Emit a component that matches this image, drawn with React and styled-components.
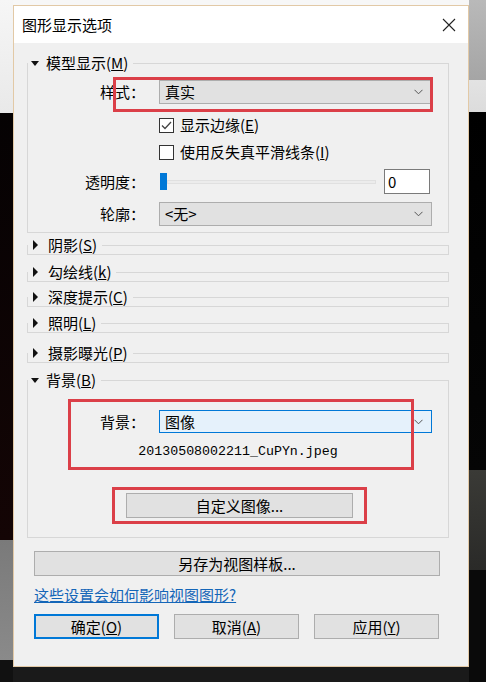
import React from "react";
import styled, { createGlobalStyle } from "styled-components";

const GlobalStyle = createGlobalStyle`
  html, body {
    margin: 0;
    padding: 0;
    background: #0c0c0c;
  }
  * {
    box-sizing: border-box;
  }
`;

const FONT = `"Noto Sans CJK SC", "Liberation Sans", sans-serif`;

const Page = styled.div`
  display: grid;
  grid-template-columns: 13px 456px 17px;
  width: 486px;
  height: 682px;
  overflow: hidden;
  font-family: ${FONT};
`;

const LeftStrip = styled.div`
  background: linear-gradient(
    #f6f6f6 0,
    #e9e9e9 113px,
    #050203 113px,
    #140505 540px,
    #7a7a7a 540px,
    #8a8a8a 660px,
    #111 660px
  );
`;

const RightStrip = styled.div`
  background: linear-gradient(
    #b9b9b9 0,
    #a5a5a5 80px,
    #e3e3e3 80px,
    #dcdcdc 112px,
    #000 112px,
    #050505 470px,
    #3a3a36 470px,
    #2a2a28 570px,
    #0a0a0a 570px
  );
`;

const Middle = styled.div`
  background: linear-gradient(#f7f7f7 0, #f7f7f7 5px, #1a1a1a 5px);
  padding-top: 5px;
`;

const Dialog = styled.div`
  display: flex;
  flex-direction: column;
  height: 662px;
  border: 1px solid #e2c9a6;
  background: #f0f0f0;
`;

const TitleBar = styled.div`
  display: flex;
  align-items: center;
  justify-content: space-between;
  height: 37px;
  padding: 0 12px 0 8px;
  background: #ffffff;
  font-size: 15px;
  color: #000;
`;

const CloseBtn = styled.span`
  display: flex;
  width: 14px;
  height: 14px;
`;

const Body = styled.div`
  display: flex;
  flex-direction: column;
  padding: 11px 19px 0 13px;
  font-size: 15px;
  color: #000;
`;

const Group = styled.fieldset`
  margin: ${(p) => p.$mt || 0}px 0 0 0;
  padding: 0;
  border: 1px solid #d7d7d7;
  min-width: 0;
`;

const Legend = styled.legend`
  display: flex;
  align-items: center;
  gap: 7px;
  height: 18px;
  line-height: 18px;
  padding: 0 5px 0 2px;
  margin: 0;
`;

const Arrow = styled.span`
  width: 0;
  height: 0;
  border-style: solid;
  ${(p) =>
    p.$open
      ? `border-width: 5px 4.5px 0 4.5px; border-color: #111 transparent transparent transparent; margin: 0 0 0 1px;`
      : `border-width: 5px 0 5px 5px; border-color: transparent transparent transparent #111; margin: 0 3px 0 3px;`}
`;

const Content = styled.div`
  position: relative;
  display: flex;
  flex-direction: column;
  padding-bottom: ${(p) => p.$pb || 0}px;
`;

const Row = styled.div`
  display: grid;
  grid-template-columns: 117px 273px;
  column-gap: 14px;
  align-items: center;
  margin-top: ${(p) => p.$mt || 0}px;
  height: ${(p) => p.$h}px;
`;

const Label = styled.span`
  justify-self: end;
  line-height: 18px;
`;

const Combo = styled.div`
  grid-column: 2;
  display: flex;
  align-items: center;
  justify-content: space-between;
  height: 100%;
  padding: 0 8px 0 5px;
  background: ${(p) => (p.$focus ? "#e5f1fb" : "#e1e1e1")};
  border: 1px solid ${(p) => (p.$focus ? "#0078d7" : "#adadad")};
  line-height: 18px;
`;

const Chevron = () => (
  <svg width="9" height="6" viewBox="0 0 9 6">
    <path d="M0.5 0.8 L4.5 4.8 L8.5 0.8" fill="none" stroke="#555" strokeWidth="1" />
  </svg>
);

const CheckLine = styled.label`
  grid-column: 2;
  display: flex;
  align-items: center;
  gap: 6px;
  line-height: 18px;
`;

const Box = styled.span`
  display: flex;
  align-items: center;
  justify-content: center;
  width: 15px;
  height: 15px;
  background: #fff;
  border: 1px solid #333;
`;

const SliderLine = styled.div`
  grid-column: 2;
  display: flex;
  align-items: center;
  gap: 8px;
  height: 100%;
`;

const Track = styled.div`
  flex: 1;
  display: flex;
  align-items: center;
  height: 100%;
  margin-left: 1px;
`;

const Thumb = styled.span`
  width: 7px;
  height: 17px;
  background: #0078d7;
`;

const Rail = styled.span`
  flex: 1;
  height: 4px;
  background: #ececec;
  border: 1px solid #e0e0e0;
`;

const NumberBox = styled.div`
  width: 46px;
  height: 100%;
  margin-right: 2px;
  padding: 3px 0 0 3px;
  background: #fff;
  border: 1px solid #7a7a7a;
  line-height: 18px;
`;

const FileName = styled.div`
  margin-top: ${(p) => p.$mt}px;
  height: 18px;
  line-height: 18px;
  text-align: center;
  font-family: "Liberation Mono", monospace;
  font-size: 13.3px;
`;

const Highlight = styled.div`
  position: absolute;
  left: ${(p) => p.$x}px;
  top: ${(p) => p.$y}px;
  width: ${(p) => p.$w}px;
  height: ${(p) => p.$h}px;
  border: 3px solid #db3f48;
  pointer-events: none;
`;

const HighlightWrap = styled.div`
  align-self: center;
  margin: ${(p) => p.$mt}px 0 0 3px;
  padding: 3px 11px;
  border: 3px solid #db3f48;
`;

const Button = styled.button`
  display: flex;
  align-items: center;
  justify-content: center;
  width: ${(p) => p.$w};
  height: 25px;
  padding: 0;
  background: #e1e1e1;
  border: ${(p) => (p.$primary ? "2px solid #0078d7" : "1px solid #adadad")};
  font-family: ${FONT};
  font-size: 15px;
  color: #000;
  line-height: 18px;
`;

const Wide = styled.div`
  display: flex;
  margin: 13px 0 0 7px;
`;

const HelpLink = styled.a`
  margin: 10px 0 0 7px;
  height: 18px;
  line-height: 18px;
  color: #1466b8;
  text-decoration: underline;
  font-size: 15px;
`;

const Footer = styled.div`
  display: flex;
  gap: 15px;
  margin: 10px 0 0 7px;
`;

const Key = ({ k }) => (
  <>
    (<u>{k}</u>)
  </>
);

const Collapsed = ({ title, k, mt }) => (
  <Group $mt={mt}>
    <Legend>
      <Arrow />
      <span>
        {title}
        <Key k={k} />
      </span>
    </Legend>
  </Group>
);

export default function App() {
  return (
    <>
      <GlobalStyle />
      <Page>
        <LeftStrip />
        <Middle>
          <Dialog>
            <TitleBar>
              <span>图形显示选项</span>
              <CloseBtn>
                <svg width="14" height="14" viewBox="0 0 14 14">
                  <path d="M1 1 L13 13 M13 1 L1 13" stroke="#222" strokeWidth="1.1" />
                </svg>
              </CloseBtn>
            </TitleBar>
            <Body>
              <Group>
                <Legend>
                  <Arrow $open />
                  <span>
                    模型显示
                    <Key k="M" />
                  </span>
                </Legend>
                <Content $pb={6}>
                  <Row $mt={8} $h={24}>
                    <Label>样式：</Label>
                    <Combo>
                      <span>真实</span>
                      <Chevron />
                    </Combo>
                  </Row>
                  <Row $mt={12} $h={18}>
                    <CheckLine>
                      <Box>
                        <svg width="11" height="9" viewBox="0 0 11 9">
                          <path d="M1 4.5 L4 7.5 L10 1" fill="none" stroke="#444" strokeWidth="1.3" />
                        </svg>
                      </Box>
                      <span>
                        显示边缘
                        <Key k="E" />
                      </span>
                    </CheckLine>
                  </Row>
                  <Row $mt={9} $h={18}>
                    <CheckLine>
                      <Box />
                      <span>
                        使用反失真平滑线条
                        <Key k="I" />
                      </span>
                    </CheckLine>
                  </Row>
                  <Row $mt={8} $h={25}>
                    <Label>透明度：</Label>
                    <SliderLine>
                      <Track>
                        <Thumb />
                        <Rail />
                      </Track>
                      <NumberBox>0</NumberBox>
                    </SliderLine>
                  </Row>
                  <Row $mt={8} $h={24}>
                    <Label>轮廓：</Label>
                    <Combo>
                      <span>&lt;无&gt;</span>
                      <Chevron />
                    </Combo>
                  </Row>
                  <Highlight $x={85} $y={5} $w={320} $h={35} />
                </Content>
              </Group>

              <Collapsed title="阴影" k="S" mt={3} />
              <Collapsed title="勾绘线" k="k" mt={8} />
              <Collapsed title="深度提示" k="C" mt={6} />
              <Collapsed title="照明" k="L" mt={7} />
              <Collapsed title="摄影曝光" k="P" mt={11} />

              <Group $mt={8}>
                <Legend>
                  <Arrow $open />
                  <span>
                    背景
                    <Key k="B" />
                  </span>
                </Legend>
                <Content $pb={13}>
                  <Row $mt={21} $h={23}>
                    <Label>背景：</Label>
                    <Combo $focus>
                      <span>图像</span>
                      <Chevron />
                    </Combo>
                  </Row>
                  <FileName $mt={10}>20130508002211_CuPYn.jpeg</FileName>
                  <HighlightWrap $mt={26}>
                    <Button $w="227px">自定义图像...</Button>
                  </HighlightWrap>
                  <Highlight $x={40} $y={10} $w={346} $h={71} />
                </Content>
              </Group>

              <Wide>
                <Button $w="406px">另存为视图样板...</Button>
              </Wide>
              <HelpLink>这些设置会如何影响视图图形?</HelpLink>
              <Footer>
                <Button $w="125px" $primary>
                  确定
                  <Key k="O" />
                </Button>
                <Button $w="125px">
                  取消
                  <Key k="A" />
                </Button>
                <Button $w="125px">
                  应用
                  <Key k="Y" />
                </Button>
              </Footer>
            </Body>
          </Dialog>
        </Middle>
        <RightStrip />
      </Page>
    </>
  );
}
